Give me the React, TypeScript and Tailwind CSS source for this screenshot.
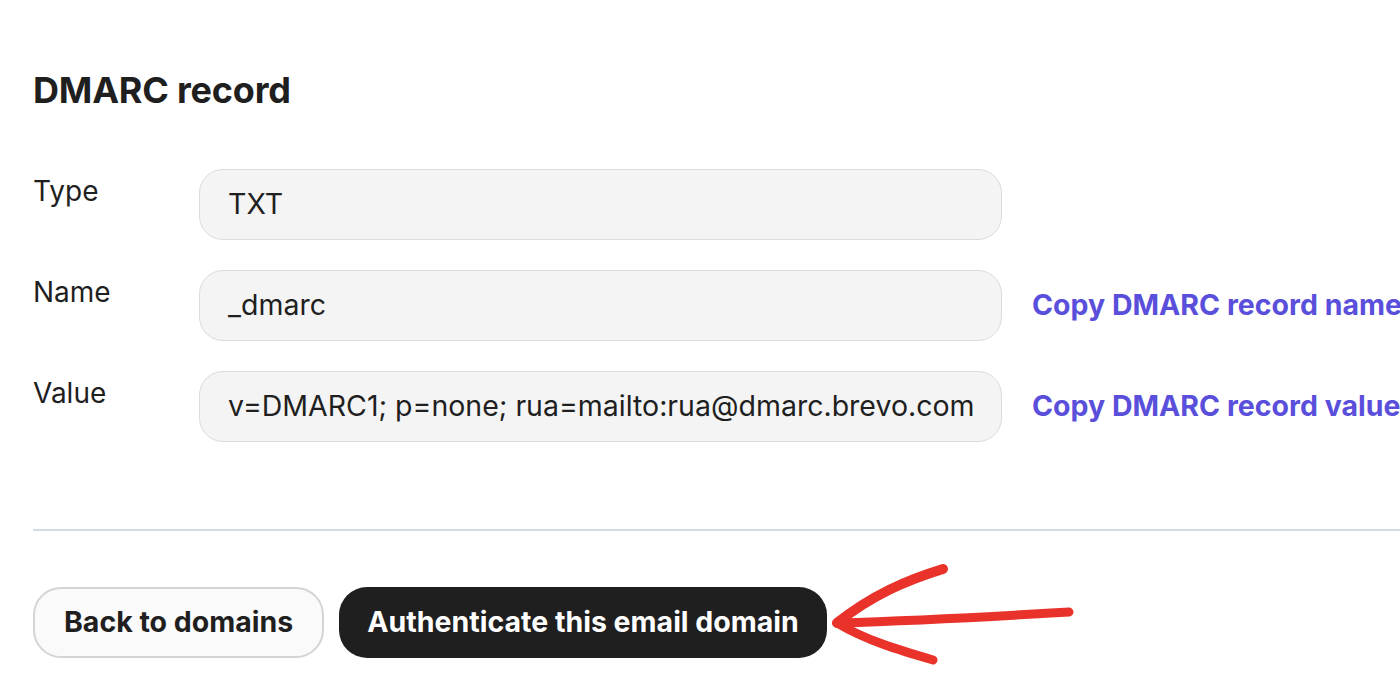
const FONT = { fontFamily: 'Inter, "Liberation Sans", sans-serif' };

const ROWS = [
  { label: 'Type', value: 'TXT', copy: null },
  { label: 'Name', value: '_dmarc', copy: 'Copy DMARC record name' },
  { label: 'Value', value: 'v=DMARC1; p=none; rua=mailto:rua@dmarc.brevo.com', copy: 'Copy DMARC record value' },
];

function Arrow() {
  return (
    <svg width="255" height="120" viewBox="0 0 255 120" fill="none" className="shrink-0 ml-[-15px]">
      <g stroke="#e8322a" strokeLinecap="round" strokeLinejoin="round">
        <path d="M10 61 C 80 59, 160 55, 242 50" strokeWidth="9" />
        <path d="M10 61 C 45 33, 80 18, 116 7" strokeWidth="10" />
        <path d="M10 61 C 40 79, 75 89, 106 98" strokeWidth="9" />
      </g>
    </svg>
  );
}

export default function App() {
  return (
    <div className="w-[1400px] h-[698px] overflow-hidden bg-white text-[#1f1f1f]" style={FONT}>
      <div className="pl-[33px] pt-[68px]">
        <h1 className="text-[36px] font-bold leading-[44px] tracking-[-0.2px]">DMARC record</h1>

        <div className="mt-[57px] flex flex-col gap-[30px]">
          {ROWS.map((r) => (
            <div key={r.label} className="flex items-center whitespace-nowrap">
              <div className="w-[166px] shrink-0 text-[28px] leading-[32px] mt-[-28px]">{r.label}</div>
              <div className="w-[803px] h-[71px] shrink-0 rounded-[24px] border border-[#dcdcdc] bg-[#f4f4f4] pl-[28px] flex items-center text-[28.5px]">
                {r.value}
              </div>
              {r.copy && (
                <div className="ml-[30px] text-[28.5px] font-bold text-[#5a4fdb]">{r.copy}</div>
              )}
            </div>
          ))}
        </div>

        <div className="mt-[87px] h-[2px] bg-[#d3dbe6]" />

        <div className="mt-[31px] flex items-center gap-[15px]">
          <button className="h-[71px] px-[29px] rounded-[28px] border-2 border-[#d4d4d4] bg-[#fafafa] text-[28.5px] font-bold">
            Back to domains
          </button>
          <button className="h-[71px] px-[28px] rounded-[28px] bg-[#1f1f1f] text-white text-[28.5px] font-bold">
            Authenticate this email domain
          </button>
          <Arrow />
        </div>
      </div>
    </div>
  );
}
